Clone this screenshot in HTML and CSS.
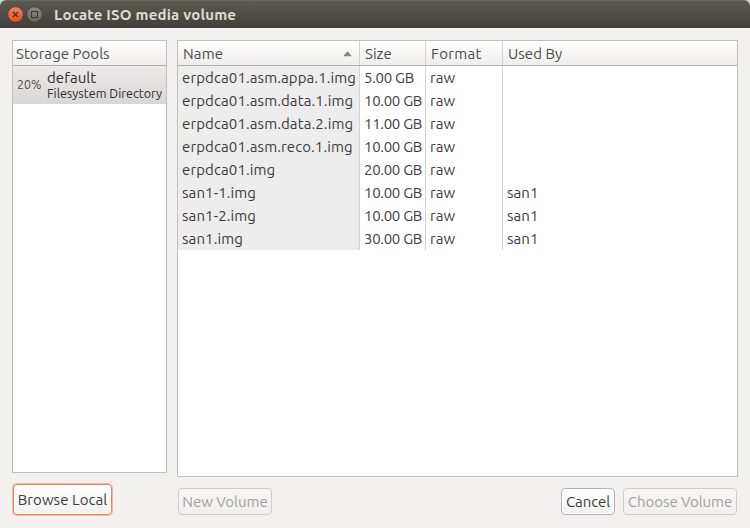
FILE: index.html
```html
<!DOCTYPE html>
<html lang="en">
<head>
<meta charset="utf-8">
<title>Locate ISO media volume</title>
<link rel="stylesheet" href="styles.css">
</head>
<body>
<div class="window">
  <header class="titlebar">
    <svg class="controls" width="42" height="28" viewBox="0 0 42 28">
      <defs>
        <linearGradient id="close" x1="0" y1="0" x2="0" y2="1"><stop offset="0" stop-color="#f58463"/><stop offset="1" stop-color="#e2501e"/></linearGradient>
        <linearGradient id="max" x1="0" y1="0" x2="0" y2="1"><stop offset="0" stop-color="#8b8981"/><stop offset="1" stop-color="#676660"/></linearGradient>
      </defs>
      <circle cx="15.5" cy="14.5" r="7.8" fill="url(#close)" stroke="#45332b" stroke-width=".7"/>
      <path d="M13 12l5 5M18 12l-5 5" stroke="#55291b" stroke-width="1.2"/>
      <circle cx="34.5" cy="14.5" r="7.8" fill="url(#max)" stroke="#35332e" stroke-width=".7"/>
      <rect x="31.5" y="11.5" width="6" height="6" fill="none" stroke="#3b3a36"/>
    </svg>
    <h1 class="title">Locate ISO media volume</h1>
  </header>
  <main class="content">
    <section class="sidebar">
      <div class="pools">
        <div class="head pools-head">Storage Pools</div>
        <div class="pool">
          <span class="percent">20%</span>
          <div class="pool-text"><div class="pool-name">default</div><div class="pool-type">Filesystem Directory</div></div>
        </div>
      </div>
      <button class="button focused">Browse Local</button>
    </section>
    <section class="main">
      <div class="volumes">
        <div class="row head">
          <div class="name"><span>Name</span><svg class="sort" width="9" height="6" viewBox="0 0 9 6"><path d="M4.5 .8L8 4.8H1z" fill="#888" stroke="#666" stroke-width=".7"/></svg></div>
          <div class="size">Size</div><div class="format">Format</div><div class="used">Used By</div>
        </div>
        <div class="row"><div class="name">erpdca01.asm.appa.1.img</div><div class="size">5.00 GB</div><div class="format">raw</div><div class="used"></div></div>
        <div class="row"><div class="name">erpdca01.asm.data.1.img</div><div class="size">10.00 GB</div><div class="format">raw</div><div class="used"></div></div>
        <div class="row"><div class="name">erpdca01.asm.data.2.img</div><div class="size">11.00 GB</div><div class="format">raw</div><div class="used"></div></div>
        <div class="row"><div class="name">erpdca01.asm.reco.1.img</div><div class="size">10.00 GB</div><div class="format">raw</div><div class="used"></div></div>
        <div class="row"><div class="name">erpdca01.img</div><div class="size">20.00 GB</div><div class="format">raw</div><div class="used"></div></div>
        <div class="row"><div class="name">san1-1.img</div><div class="size">10.00 GB</div><div class="format">raw</div><div class="used">san1</div></div>
        <div class="row"><div class="name">san1-2.img</div><div class="size">10.00 GB</div><div class="format">raw</div><div class="used">san1</div></div>
        <div class="row"><div class="name">san1.img</div><div class="size">30.00 GB</div><div class="format">raw</div><div class="used">san1</div></div>
      </div>
      <div class="actions">
        <button class="button new" disabled>New Volume</button>
        <button class="button cancel">Cancel</button>
        <button class="button choose" disabled>Choose Volume</button>
      </div>
    </section>
  </main>
</div>
</body>
</html>
```
FILE: styles.css
```css
* { box-sizing: border-box; }
body { margin: 0; background: #d9d6d2; font: 15px/24px Ubuntu, "Noto Sans", sans-serif; letter-spacing: .05px; color: #3c3c3c; white-space: nowrap; }
.window { width: 750px; height: 528px; background: #f2f1ef; border-radius: 6px 6px 0 0; overflow: hidden; }
.titlebar { display: flex; height: 28px; background: linear-gradient(#5c5a50, #403f3a); border-top: 1px solid #69665c; }
.controls { margin-top: -1px; flex: none; }
.title { margin: 0 0 0 12px; font-size: 15px; line-height: 28px; font-weight: 700; letter-spacing: .2px; color: #dfdbd2; }
.content { display: flex; gap: 10px; padding: 12px 12px 0; height: 500px; }
.sidebar { width: 155px; display: flex; flex-direction: column; align-items: flex-start; }
.main { width: 561px; }
.pools, .volumes { background: #fff; border: 1px solid #c0bfbb; width: 100%; }
.pools { height: 433px; }
.volumes { height: 437px; }
.head { height: 25px; line-height: 26px; background: linear-gradient(#fefefe, #efeeec); border-bottom: 1px solid #b4b2ad; color: #4c4c4c; }
.pools-head { padding-left: 3px; }
.pool { display: flex; height: 38px; padding-left: 4px; background: linear-gradient(#ebeae9, #dad7d5); color: #2c2c2c; }
.percent { width: 30px; font-size: 12.5px; line-height: 37px; letter-spacing: 0; color: #4c4c4c; }
.pool-name { line-height: 18px; padding-top: 3px; }
.pool-type { font-size: 12.5px; line-height: 12px; letter-spacing: .02px; }
.row { display: grid; grid-template-columns: 182px 66px 77px 1fr; height: 23px; }
.row.head { height: 25px; }
.row > div { padding-left: 4px; border-right: 1px solid #d5d4d2; height: 23px; }
.row.head > div { padding-left: 5px; height: 24px; }
.row.head > .format { letter-spacing: .3px; }
.row > div:last-child { border-right: 0; }
.row > .name { background: #ededed; letter-spacing: .11px; }
.row:not(.head) > .size { letter-spacing: -.3px; }
.row.head > .name { background: none; display: flex; justify-content: space-between; align-items: center; padding-right: 7px; }
.row.head span { padding-top: 2px; }
.sort { margin-top: 2px; }
.button { border: 1px solid #b7b4b0; border-radius: 4px; padding: 0; height: 27px; background: linear-gradient(#fff, #f2f1f0); box-shadow: inset 0 0 0 1px #fff; font: inherit; letter-spacing: 0; line-height: 24px; color: #3c3c3c; text-align: center; }
.button:disabled { color: #a2a19f; border-color: #d0cecb; background: linear-gradient(#f7f6f5, #f1f0ee); box-shadow: none; }
.focused { width: 99px; height: 31px; margin: 11px 0 0 1px; letter-spacing: .05px; border: 1px solid #e9835f; border-radius: 4px; box-shadow: 0 0 0 1px #f3b8a3, inset 0 0 0 1px #fff; }
.actions { display: flex; margin-top: 11px; padding-left: 1px; }
.new { width: 94px; }
.cancel { width: 54px; margin-left: auto; letter-spacing: -.1px; }
.choose { width: 114px; margin-left: 8px; margin-right: 1px; letter-spacing: -.05px; }
```
